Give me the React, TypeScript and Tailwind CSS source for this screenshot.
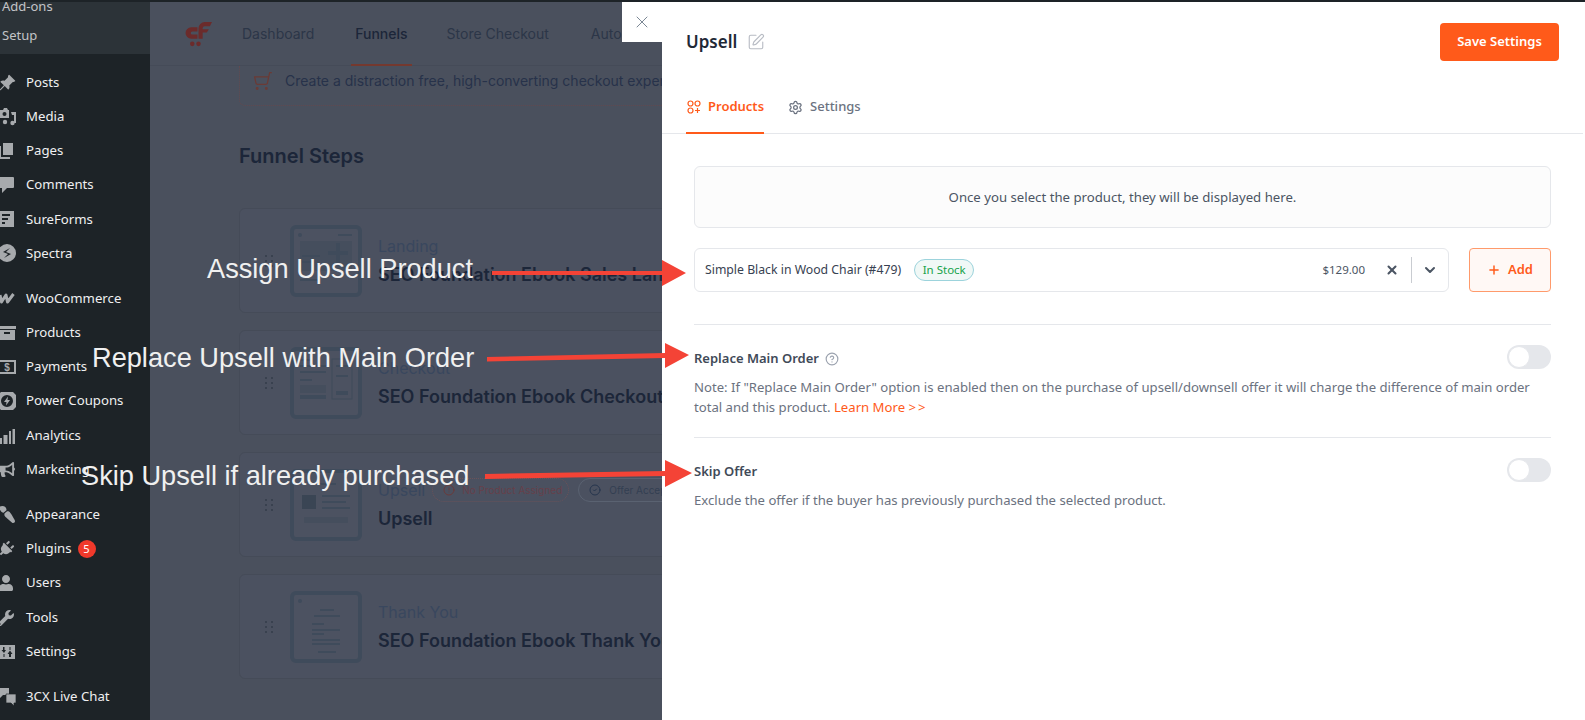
import type { ReactNode } from "react"
import { ChevronDown, CircleAlert, CircleCheck, CircleHelp, Plus, Settings, ShoppingCart, SquarePen, X } from "lucide-react"
import { BsPinAngleFill } from "react-icons/bs"
import { FaBullhorn, FaPaintBrush, FaPlug, FaUser, FaWrench } from "react-icons/fa"

const iconGray = "#a7aaad"

function Glyph({ children }: { children: ReactNode }) {
  return (
    <svg viewBox="0 0 20 20" width="20" height="20" fill={iconGray}>
      {children}
    </svg>
  )
}

const menuIcons: Record<string, ReactNode> = {
  Posts: <BsPinAngleFill size={18} color={iconGray} />,
  Media: (
    <Glyph>
      <path d="M2 3h3l1-2h3l1 2h1v8H2z" />
      <circle cx="6.500" cy="7" r="2" fill="#1d2327" />
      <path d="M13 5h5v11h-2V8h-2z" />
      <circle cx="7" cy="15" r="2.200" />
      <circle cx="14.500" cy="16" r="2.200" />
    </Glyph>
  ),
  Pages: (
    <Glyph>
      <path d="M5 2h10v12H5z" />
      <path d="M1 5h2v11h9v2H1z" />
    </Glyph>
  ),
  Comments: (
    <Glyph>
      <path d="M1 2h14a1 1 0 0 1 1 1v9a1 1 0 0 1-1 1H9l-5 5v-5H1z" />
    </Glyph>
  ),
  SureForms: (
    <Glyph>
      <path fillRule="evenodd" d="M0 2h16v16H0zM4 5v2h8V5zM4 9v2h6V9zM4 13v2h3v-2z" />
    </Glyph>
  ),
  Spectra: (
    <Glyph>
      <path fillRule="evenodd" d="M9 0a9 9 0 1 1 0 18A9 9 0 0 1 9 0zm3 4L5 8l5 2-4 4 7-4-5-2z" />
    </Glyph>
  ),
  WooCommerce: (
    <svg viewBox="0 0 20 20" width="20" height="20" fill="none" stroke={iconGray} strokeWidth="3" strokeLinejoin="round">
      <path d="M2 6l1.500 7 4.500-7 1.500 7 6-8" />
    </svg>
  ),
  Products: (
    <Glyph>
      <path d="M0 3h18v3H0z" />
      <path fillRule="evenodd" d="M1 7h16v10H1zM6 9v2h6V9z" />
    </Glyph>
  ),
  Payments: (
    <svg viewBox="0 0 20 20" width="20" height="20">
      <rect x="1" y="4" width="16" height="12" fill="none" stroke={iconGray} strokeWidth="2" />
      <text x="9" y="14" textAnchor="middle" fontSize="10" fontWeight="700" fill={iconGray} fontFamily="Liberation Sans, sans-serif">
        $
      </text>
    </svg>
  ),
  "Power Coupons": (
    <Glyph>
      <path fillRule="evenodd" d="M3 1h12l3 3v12l-3 3H3l-3-3V4zM9 4a6 6 0 1 0 0 12A6 6 0 0 0 9 4zm1 1.500L6 11h2.500L8 14.500 12 9H9.500z" />
    </Glyph>
  ),
  Analytics: (
    <Glyph>
      <path d="M0 12h4v6H0zM5.500 9h4v9h-4zM11 5h2v13h-2zM14.500 3H17v15h-2.500z" />
    </Glyph>
  ),
  Marketing: <FaBullhorn size={17} color={iconGray} />,
  Appearance: <FaPaintBrush size={17} color={iconGray} className="-scale-y-100" />,
  Plugins: <FaPlug size={16} color={iconGray} className="rotate-45" />,
  Users: <FaUser size={16} color={iconGray} />,
  Tools: <FaWrench size={16} color={iconGray} />,
  Settings: (
    <Glyph>
      <path fillRule="evenodd" d="M1 3h16v14H1zM5 5v3H3.500L6 11l2-3H6.500V5zM5.500 12v3h1v-3zM11.500 5v3h1V5zM12 8.500 9.500 12H11v3h2v-3h1.500z" />
    </Glyph>
  ),
  "3CX Live Chat": (
    <Glyph>
      <path d="M0 1h11v7H5l-3 3V8H0z" />
      <path d="M8 7h10v9h-2v3l-3-3H8z" stroke="#1d2327" strokeWidth="0.700" />
    </Glyph>
  ),
}

function MenuRow({ label, badge }: { label: string; badge?: string }) {
  return (
    <div className="flex h-[34.200px] items-center">
      <span className="flex w-[26px] shrink-0 items-center justify-start">
        <span className="-ml-[2px] flex">{menuIcons[label]}</span>
      </span>
      <span className="text-[13.200px] text-[#f0f0f1]">{label}</span>
      {badge && (
        <span className="ml-[6px] flex h-[18px] w-[18px] items-center justify-center rounded-full bg-[#f0392b] text-[11px] text-white">
          {badge}
        </span>
      )}
    </div>
  )
}

function Sidebar() {
  const groups = [
    ["Posts", "Media", "Pages", "Comments", "SureForms", "Spectra"],
    ["WooCommerce", "Products", "Payments", "Power Coupons", "Analytics", "Marketing"],
    ["Appearance", "Plugins", "Users", "Tools", "Settings"],
    ["3CX Live Chat"],
  ]
  return (
    <aside className="h-full w-[150px] shrink-0 overflow-hidden bg-[#1d2327] font-['Noto_Sans',sans-serif]">
      <div className="h-[52px] overflow-hidden bg-[#2c3338] pl-[2px] text-[13px] text-[#c3c4c7]">
        <div className="-mt-[10px] h-[29px] leading-[29px]">Add-ons</div>
        <div className="h-[29px] leading-[29px]">Setup</div>
      </div>
      <div className="flex flex-col gap-[11px] pt-[11.600px]">
        {groups.map((group) => (
          <div key={group[0]}>
            {group.map((label) => (
              <MenuRow key={label} label={label} badge={label === "Plugins" ? "5" : undefined} />
            ))}
          </div>
        ))}
      </div>
    </aside>
  )
}

function Thumb({ kind }: { kind: string }) {
  return (
    <div className="h-[72px] w-[72px] shrink-0 rounded-[6px] border-4 border-[#3f4b5b] bg-[#4c5261]">
      <svg viewBox="0 0 64 64" width="64" height="64" fill="#3f4b5b">
        {kind === "landing" && (
          <>
            <circle cx="6" cy="6" r="2" />
            <rect x="44" y="5" width="14" height="2" />
            <rect x="6" y="12" width="52" height="30" fill="#454e5d" />
            <path d="M50 18v8h-8v4h8v8h4v-8h8v-4h-8v-8z" transform="translate(-8 -4)" />
            <rect x="8" y="26" width="18" height="2" />
            <rect x="8" y="32" width="12" height="2" />
            <rect x="6" y="50" width="20" height="2" />
          </>
        )}
        {kind === "checkout" && (
          <>
            <rect x="6" y="8" width="12" height="2" />
            <rect x="6" y="14" width="26" height="2" />
            <rect x="6" y="20" width="26" height="2" />
            <rect x="6" y="28" width="12" height="2" />
            <rect x="6" y="34" width="26" height="8" fill="#454e5d" />
            <rect x="6" y="44" width="26" height="4" />
            <rect x="38" y="8" width="20" height="40" fill="none" stroke="#3f4b5b" />
            <rect x="42" y="14" width="12" height="2" />
            <rect x="42" y="24" width="12" height="2" />
            <rect x="42" y="40" width="12" height="4" />
          </>
        )}
        {kind === "upsell" && (
          <>
            <rect x="24" y="10" width="18" height="2" />
            <rect x="8" y="22" width="14" height="14" fill="#3a4554" />
            <rect x="28" y="22" width="28" height="2" />
            <rect x="28" y="28" width="24" height="2" />
            <rect x="28" y="34" width="28" height="2" />
            <rect x="10" y="44" width="44" height="6" rx="1" fill="#454e5d" />
          </>
        )}
        {kind === "thanks" && (
          <>
            <circle cx="6" cy="6" r="2" />
            <rect x="26" y="14" width="14" height="2" />
            <rect x="20" y="20" width="26" height="2" />
            <rect x="18" y="28" width="12" height="2" />
            <rect x="18" y="34" width="28" height="2" />
            <rect x="18" y="38" width="12" height="2" />
            <rect x="18" y="44" width="28" height="2" />
            <rect x="18" y="48" width="28" height="2" />
            <rect x="24" y="56" width="18" height="2" />
          </>
        )}
      </svg>
    </div>
  )
}

function Grip() {
  return (
    <div className="grid w-[8px] shrink-0 grid-cols-2 gap-x-[4px] gap-y-[3px]">
      {Array.from({ length: 6 }).map((_, i) => (
        <span key={i} className="h-[2px] w-[2px] bg-[#39414f]" />
      ))}
    </div>
  )
}

function StepCard({ label, title, kind, badges }: { label: string; title: string; kind: string; badges?: boolean }) {
  return (
    <div className="flex h-[105px] items-center rounded-[6px] border border-[#454b58] bg-[#4b5160] pl-[25px]">
      <Grip />
      <div className="ml-[17px]">
        <Thumb kind={kind} />
      </div>
      <div className="ml-[16px]">
        <div className="flex h-[24px] items-center">
          <span className="mr-[7px] text-[16px] text-[#39475e]">{label}</span>
          {badges && (
            <>
              <span className="flex h-[24px] items-center gap-[7px] rounded-full border border-dotted border-[#6b5259] pr-[6px] pl-[10px] text-[10px] whitespace-nowrap text-[#66404a]">
                <CircleAlert size={12} color="#6b3a3a" />
                No Product Assigned
              </span>
              <span className="ml-[9px] flex h-[24px] items-center gap-[8px] rounded-full border border-[#5a6271] pr-[8px] pl-[10px] text-[10px] whitespace-nowrap text-[#333f52]">
                <CircleCheck size={12} color="#26354d" />
                Offer Accepted
              </span>
            </>
          )}
        </div>
        <div className="mt-[5px] text-[18px] leading-[24px] font-semibold whitespace-nowrap text-[#1c2639]">{title}</div>
      </div>
    </div>
  )
}

function Background() {
  return (
    <main className="h-full min-w-0 flex-1 overflow-hidden bg-[#4a505d] font-['Inter',sans-serif]">
      <div className="flex h-[64px] items-center border-b border-[#454b58] pl-[34px]">
        <svg viewBox="0 0 28 28" width="29" height="29" fill="#6b2b2b" className="shrink-0">
          <path d="M13 8H7a5.500 5.500 0 0 0 0 11h6v-4H8a1.500 1.500 0 0 1 0-3h5z" />
          <path d="M14 19V9a6 6 0 0 1 6-6h7l-2 4h-5a2 2 0 0 0-2 2v1h6l-2 3h-4v6z" />
          <circle cx="8" cy="24" r="2.200" />
          <circle cx="14" cy="24" r="2.200" />
        </svg>
        <nav className="ml-[29px] flex h-full text-[14px] text-[#2c3648]">
          <span className="flex items-center">Dashboard</span>
          <span className="relative ml-[41px] flex items-center font-medium text-[#1c2639]">
            Funnels
            <span className="absolute -right-[4px] -bottom-px -left-[4px] h-[2px] bg-[#74392f]" />
          </span>
          <span className="ml-[39px] flex items-center whitespace-nowrap">Store Checkout</span>
          <span className="ml-[42px] flex items-center">Automations</span>
        </nav>
      </div>
      <div className="ml-[89px] w-[640px]">
        <div className="flex h-[40px] items-center gap-[12px] rounded-b-[6px] border-x border-b border-dotted border-[#64494f] pb-[10px] pl-[13px] text-[14px] whitespace-nowrap text-[#27324a]">
          <ShoppingCart size={20} color="#6b3a35" strokeWidth={1.500} className="-scale-x-100" />
          Create a distraction free, high-converting checkout experience without any code
        </div>
        <h2 className="mt-[36px] text-[20px] leading-[28px] font-semibold text-[#1c2639]">Funnel Steps</h2>
        <div className="mt-[38px] flex flex-col gap-[17px]">
          <StepCard label="Landing" title="SEO Foundation Ebook Sales Landing" kind="landing" />
          <StepCard label="Checkout" title="SEO Foundation Ebook Checkout" kind="checkout" />
          <StepCard label="Upsell" title="Upsell" kind="upsell" badges />
          <StepCard label="Thank You" title="SEO Foundation Ebook Thank You" kind="thanks" />
        </div>
      </div>
    </main>
  )
}

function Toggle() {
  return (
    <span className="flex h-[24px] w-[44px] items-center rounded-full bg-[#e5e7eb] pl-[1px]">
      <span className="h-[22px] w-[22px] rounded-full border border-[#e5e7eb] bg-white" />
    </span>
  )
}

function ProductsIcon() {
  return (
    <svg viewBox="0 0 14 14" width="14" height="14" fill="none" stroke="#ff5a1a" strokeWidth="1.200" className="ml-[1px]">
      <circle cx="3.500" cy="3.500" r="2.500" />
      <circle cx="10.500" cy="3.500" r="2.500" />
      <circle cx="3.500" cy="10.500" r="2.500" />
      <path d="M10.500 8v5M8 10.500h5" />
    </svg>
  )
}

function Panel() {
  return (
    <section className="h-full w-[923px] shrink-0 bg-white font-['Noto_Sans',sans-serif]">
      <div className="mr-[2px] border-b border-[#e5e7eb] pl-[24px]">
        <div className="flex h-[79px] items-center justify-between pr-[24px]">
          <div className="flex items-center gap-[10px]">
            <h1 className="text-[17px] font-semibold text-[#1f2937]">Upsell</h1>
            <SquarePen size={18} color="#b8bcc4" strokeWidth={1.500} />
          </div>
          <button className="h-[38px] w-[119px] rounded-[4px] bg-[#ff5a1a] text-[13px] font-semibold text-white">Save Settings</button>
        </div>
        <div className="flex h-[52px] gap-[24px]">
          <div className="flex h-[53px] items-center gap-[7px] border-b-2 border-[#ff5a1a] text-[13px] font-semibold text-[#ff5a1a]">
            <ProductsIcon />
            Products
          </div>
          <div className="flex h-[52px] items-center gap-[7px] text-[13px] font-medium text-[#6b7280]">
            <Settings size={15} color="#6b7280" />
            Settings
          </div>
        </div>
      </div>
      <div className="pt-[32px] pr-[34px] pl-[32px]">
        <div className="flex h-[62px] items-center justify-center rounded-[6px] border border-[#e5e7eb] bg-[#fcfcfc] pt-px text-[13.200px] text-[#4b5563]">
          Once you select the product, they will be displayed here.
        </div>
        <div className="mt-[20px] flex gap-[20px]">
          <div className="flex h-[44px] min-w-0 flex-1 items-center rounded-[6px] border border-[#e5e7eb] pl-[10px]">
            <span className="text-[12.250px] text-[#374151]">Simple Black in Wood Chair (#479)</span>
            <span className="ml-[13px] flex h-[22px] w-[60px] items-center justify-center rounded-full border border-[#9cd3dc] bg-[#f0f8f6] text-[11.500px] text-[#16a34a]">
              In Stock
            </span>
            <span className="ml-auto text-[11.500px] text-[#4b5563]">$129.00</span>
            <X size={14} color="#4b5563" strokeWidth={3.500} className="ml-[20px]" />
            <span className="ml-[12px] h-[26px] w-px bg-[#c9ccd1]" />
            <ChevronDown size={16} color="#4b5563" strokeWidth={3} className="mr-[10px] ml-[10px]" />
          </div>
          <button className="flex h-[44px] w-[82px] shrink-0 items-center justify-center gap-[7px] rounded-[4px] border border-[#ff9a6b] bg-[#fff8f5] text-[13px] font-semibold text-[#ff5a1a]">
            <Plus size={14} color="#ff5a1a" strokeWidth={2.500} />
            Add
          </button>
        </div>
        <div className="mt-[32px] border-t border-[#e5e7eb] pt-[20px]">
          <div className="flex h-[24px] items-center justify-between">
            <div className="flex items-center gap-[6px] pt-[4px] text-[13px] font-semibold text-[#414a58]">
              Replace Main Order
              <CircleHelp size={14} color="#9ca3af" />
            </div>
            <Toggle />
          </div>
          <p className="mt-[8px] text-[13.150px] leading-[20px] text-[#6b7280]">
            Note: If "Replace Main Order" option is enabled then on the purchase of upsell/downsell offer it will charge the difference of main order total and this product.{" "}
            <span className="text-[#ff5a1a]">
              Learn More <span className="tracking-[2px]">&gt;&gt;</span>
            </span>
          </p>
        </div>
        <div className="mt-[20px] border-t border-[#e5e7eb] pt-[20px]">
          <div className="flex h-[24px] items-center justify-between">
            <div className="pt-[4px] text-[13px] font-semibold text-[#414a58]">Skip Offer</div>
            <Toggle />
          </div>
          <p className="mt-[8px] text-[13.150px] leading-[20px] text-[#6b7280]">Exclude the offer if the buyer has previously purchased the selected product.</p>
        </div>
      </div>
    </section>
  )
}

export default function App() {
  return (
    <div className="relative flex h-[720px] w-[1585px] flex-col overflow-hidden bg-white">
      <div className="h-[2px] shrink-0 bg-[#1d2327]" />
      <div className="flex min-h-0 flex-1">
        <Sidebar />
        <Background />
        <Panel />
      </div>

      {/* close tab of the drawer */}
      <div className="absolute top-[2px] left-[622px] flex h-[40px] w-[40px] items-center justify-center bg-white">
        <X size={20} color="#7b8794" strokeWidth={1.200} />
      </div>

      {/* annotations added on top of the screenshot */}
      <svg className="pointer-events-none absolute inset-0" width="1585" height="720" fill="#f44336">
        <path d="M492 271L662 271L662 260L686 273L662 286L662 275L492 275z" />
        <path d="M487 357L665 353L665 343L689 355L665 368L665 358L487 361.500z" />
        <path d="M485 474L665 471L665 460L692 473L665 487L665 476L485 479z" />
      </svg>
      <span className="absolute top-[253px] left-[207px] font-['Liberation_Sans',sans-serif] text-[27.200px] leading-[32px] whitespace-nowrap text-[#f0f0f0]">Assign Upsell Product</span>
      <span className="absolute top-[342px] left-[92px] font-['Liberation_Sans',sans-serif] text-[27.200px] leading-[32px] whitespace-nowrap text-[#f0f0f0]">Replace Upsell with Main Order</span>
      <span className="absolute top-[460px] left-[81px] font-['Liberation_Sans',sans-serif] text-[27.200px] leading-[32px] whitespace-nowrap text-[#f0f0f0]">Skip Upsell if already purchased</span>
    </div>
  )
}
